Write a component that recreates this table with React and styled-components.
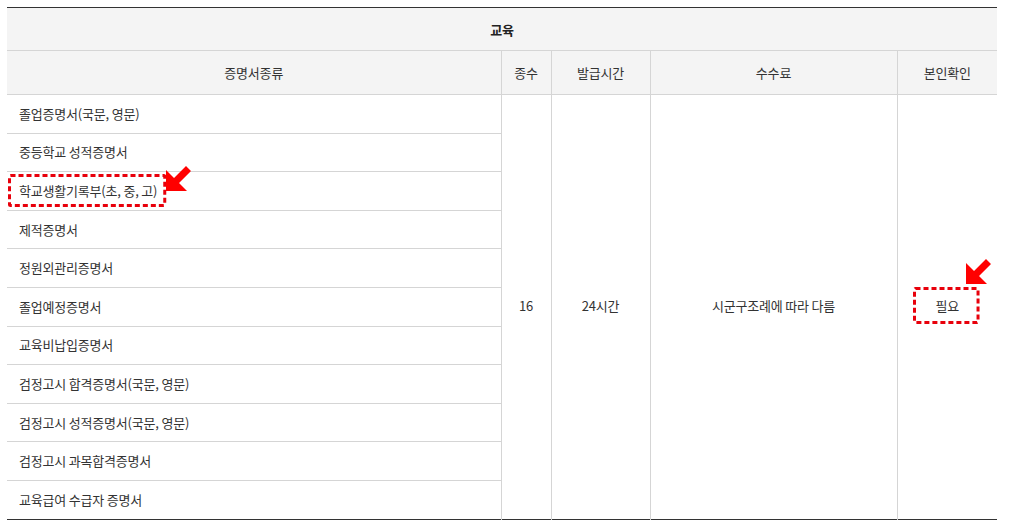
import styled, { createGlobalStyle } from 'styled-components';

const docs = [
  '졸업증명서(국문, 영문)',
  '중등학교 성적증명서',
  '학교생활기록부(초, 중, 고)',
  '제적증명서',
  '정원외관리증명서',
  '졸업예정증명서',
  '교육비납입증명서',
  '검정고시 합격증명서(국문, 영문)',
  '검정고시 성적증명서(국문, 영문)',
  '검정고시 과목합격증명서',
  '교육급여 수급자 증명서',
];

const columns = [
  { label: '증명서종류', width: 494 },
  { label: '종수', width: 50 },
  { label: '발급시간', width: 99 },
  { label: '수수료', width: 247 },
  { label: '본인확인', width: 100 },
];

function Arrow({ left, top }) {
  return (
    <ArrowIcon width="26" height="26" viewBox="0 0 26 26" $left={left} $top={top}>
      <polygon points="0,26 0,5 8,13 20,1 25,6 13,18 21,26" fill="#ff0000" />
    </ArrowIcon>
  );
}

function Highlight({ children, pad, shift, arrow }) {
  return (
    <Marked $pad={pad} $shift={shift}>
      <Dashes>
        <rect x="1.5" y="1.5" rx="1" style={{ width: 'calc(100% - 3px)', height: 'calc(100% - 3px)' }} />
      </Dashes>
      {children}
      <Arrow left={arrow[0]} top={arrow[1]} />
    </Marked>
  );
}

export default function App() {
  return (
    <>
      <GlobalStyle />
      <Page>
        <Table>
          <colgroup>
            {columns.map((c) => (
              <col key={c.label} style={{ width: c.width }} />
            ))}
          </colgroup>
          <thead>
            <TitleRow>
              <Title colSpan={5}>교육</Title>
            </TitleRow>
            <HeadRow>
              {columns.map((c) => (
                <Head key={c.label}>{c.label}</Head>
              ))}
            </HeadRow>
          </thead>
          <tbody>
            {docs.map((d, i) => (
              <BodyRow key={d}>
                <DocCell $last={i === docs.length - 1}>
                  {i === 2 ? (
                    <Highlight pad="7px 9px 7px 11px" shift="-11px" arrow={[null, -9]}>
                      {d}
                    </Highlight>
                  ) : (
                    d
                  )}
                </DocCell>
                {i === 0 && (
                  <>
                    <MergedCell rowSpan={11}>16</MergedCell>
                    <MergedCell rowSpan={11}>24시간</MergedCell>
                    <MergedCell rowSpan={11}>시군구조례에 따라 다름</MergedCell>
                    <MergedCell rowSpan={11}>
                      <Highlight pad="9px 21px 9px 22px" shift="-1px" arrow={[53, -29]}>
                        필요
                      </Highlight>
                    </MergedCell>
                  </>
                )}
              </BodyRow>
            ))}
          </tbody>
        </Table>
      </Page>
    </>
  );
}

const GlobalStyle = createGlobalStyle`
  body {
    margin: 0;
    background: #ffffff;
    font-family: 'Noto Sans CJK KR', 'Noto Sans', sans-serif;
  }
`;

const Page = styled.div`
  padding: 7px 15px 0 7px;
`;

const Table = styled.table`
  width: 990px;
  border-collapse: collapse;
  table-layout: fixed;
  border-top: 1px solid #333333;
  border-bottom: 1px solid #333333;
  font-size: 13px;
  letter-spacing: -0.2px;
  color: #333333;
`;

const TitleRow = styled.tr`
  height: 43px;
`;

const Title = styled.th`
  background: #f4f4f4;
  font-weight: 700;
  font-size: 13px;
  color: #222222;
  border-bottom: 1px solid #d5d5d5;
  padding: 0;
`;

const HeadRow = styled.tr`
  height: 44px;
`;

const Head = styled.th`
  background: #f4f4f4;
  font-weight: 400;
  border-bottom: 1px solid #d5d5d5;
  border-left: 1px solid #d5d5d5;
  padding: 0;
  &:first-child {
    border-left: none;
  }
`;

const BodyRow = styled.tr`
  height: 38.6px;
`;

const DocCell = styled.td`
  padding: 0 0 1px 12px;
  text-align: left;
  border-bottom: ${({ $last }) => ($last ? 'none' : '1px solid #d5d5d5')};
`;

const MergedCell = styled.td`
  text-align: center;
  border-left: 1px solid #d5d5d5;
  padding: 0 0 2px;
`;

const Marked = styled.span`
  position: relative;
  display: inline-block;
  padding: ${({ $pad }) => $pad};
  margin-left: ${({ $shift }) => $shift};
`;

const Dashes = styled.svg`
  position: absolute;
  inset: 0;
  width: 100%;
  height: 100%;
  overflow: visible;
  rect {
    fill: none;
    stroke: #e8000b;
    stroke-width: 3;
    stroke-dasharray: 5 3;
  }
`;

const ArrowIcon = styled.svg`
  position: absolute;
  top: ${({ $top }) => $top}px;
  ${({ $left }) => ($left == null ? 'right: -26px;' : `left: ${$left}px;`)}
`;
